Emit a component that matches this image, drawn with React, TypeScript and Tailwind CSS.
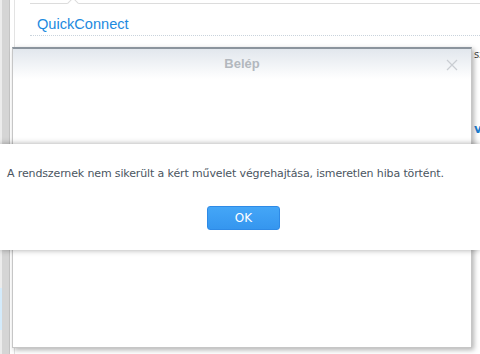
import React from "react";

const font = { fontFamily: '"DejaVu Sans", Verdana, sans-serif' };
const arial = { fontFamily: '"Liberation Sans", Arial, sans-serif' };

function CloseIcon() {
  return (
    <svg width="12" height="12" viewBox="0 0 12 12" className="block">
      <path d="M1 1 L11 11 M11 1 L1 11" stroke="#c9cdd2" strokeWidth="1.2" fill="none" />
    </svg>
  );
}

export default function App() {
  return (
    <div className="relative w-[480px] h-[354px] overflow-hidden bg-white" style={font}>
      {/* desktop behind */}
      <div className="flex h-full">
        <div className="w-[2px] h-full bg-[#ececec]" />
        <div className="w-[8px] h-full bg-[#d5d5d5] border-r border-[#c4c4c4]" />
        <div className="w-[4px]" />
        <div className="flex-1 border-l border-[#e3e3e3] relative">
          <div className="ml-[15px] mt-[3px] h-px bg-[#dcdcdc] relative">
            <div className="absolute left-[39px] -top-[4px] w-[8px] h-[8px] bg-white border-l border-t border-[#dcdcdc] rotate-45" />
          </div>
          <div className="pl-[22px] pt-[10px] text-[14.6px] leading-[20px] text-[#1d8ae0]" style={arial}>
            QuickConnect
          </div>
          <div className="ml-[15px] mt-[1px] border-t border-dotted border-[#c9d3dc]" />
        </div>
      </div>

      {/* right edge fragments */}
      <div className="absolute left-[474px] top-[50px] text-[10px] leading-none text-[#444]">sz</div>
      <div className="absolute left-[474px] top-[123px] text-[12px] font-bold leading-none text-[#1d7fd0]">v</div>
      <div className="absolute left-0 top-[288px] w-[2px] h-[42px] bg-[#d4ebfb]" />

      {/* Belép window */}
      <div className="absolute left-[12px] top-[47px] w-[460px] h-[301px] bg-white border-t-2 border-[#8b949d] border-x border-b border-x-[#c6c6c6] border-b-[#c6c6c6] shadow-[2px_2px_5px_rgba(0,0,0,0.3)]">
        <div className="h-[30px] bg-gradient-to-b from-[#e2e7ed] to-white flex items-center justify-center relative">
          <span className="text-[13px] font-bold text-[#b3b8be]" style={arial}>
            Belép
          </span>
          <div className="absolute right-[13px] top-[10px]">
            <CloseIcon />
          </div>
        </div>
      </div>

      {/* message box */}
      <div className="absolute left-0 top-[144px] w-[480px] h-[106px] bg-white shadow-[0_0_6px_rgba(0,0,0,0.35)] flex flex-col">
        <div className="pt-[22px] pl-[7px] text-[11px] leading-[16px] tracking-[-0.13px] text-[#4a5561] whitespace-nowrap">
          A rendszernek nem sikerült a kért művelet végrehajtása, ismeretlen hiba történt.
        </div>
        <div className="flex justify-center pt-[24px]">
          <button className="ml-[7px] w-[73px] h-[24px] rounded-[3px] border border-[#2e8ae6] bg-gradient-to-b from-[#44a6f7] to-[#3596ef] text-white text-[12px]">
            OK
          </button>
        </div>
      </div>
    </div>
  );
}
